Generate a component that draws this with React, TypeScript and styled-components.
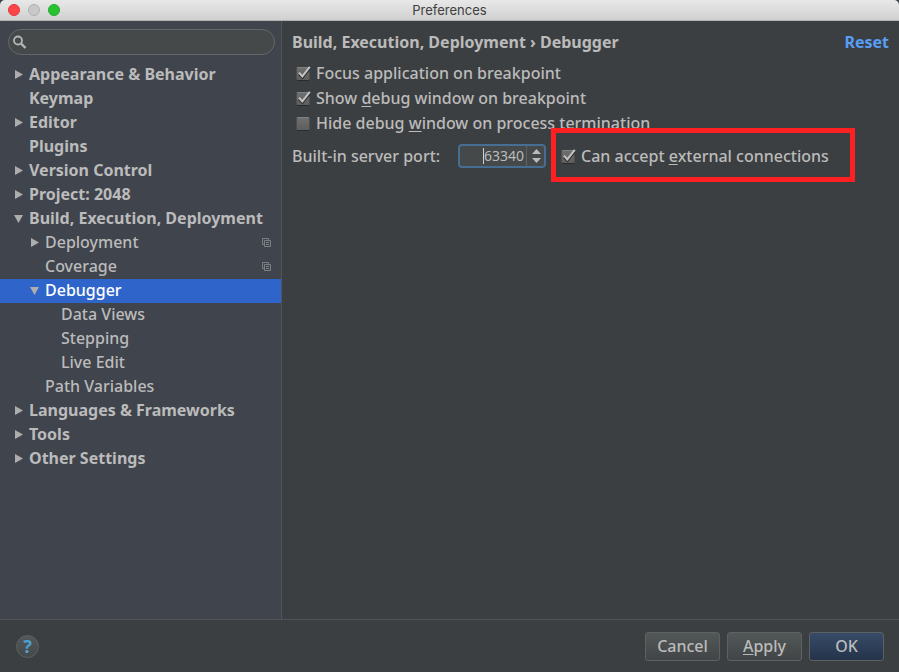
import React, { useState } from 'react';
import styled, { createGlobalStyle, css } from 'styled-components';

const GlobalStyle = createGlobalStyle`
  * { box-sizing: border-box; }
  body {
    margin: 0;
    background: #3c3f41;
    color: #bbbbbb;
    font: 500 16px/24px "Noto Sans", "Lucida Grande", sans-serif;
  }
  button, input { font: inherit; color: inherit; }
`;

const Window = styled.div`
  display: flex;
  flex-direction: column;
  min-height: 100vh;
`;

const TitleBar = styled.header`
  display: grid;
  grid-template-columns: 1fr auto 1fr;
  align-items: center;
  height: 21px;
  padding: 0 8px;
  border-bottom: 1px solid #b1b1b1;
  border-radius: 5px 5px 0 0;
  background: linear-gradient(#e8e8e8, #d0d0d0);
`;

const Lights = styled.div`
  display: flex;
  gap: 8px;
`;

const Light = styled.button<{ $fill: string; $edge: string }>`
  width: 12px;
  height: 12px;
  padding: 0;
  border: 1px solid ${(p) => p.$edge};
  border-radius: 50%;
  background: ${(p) => p.$fill};
`;

const WindowTitle = styled.h1`
  margin: 0;
  color: #404040;
  font: 400 13px/20px Inter, sans-serif;
`;

const Body = styled.div`
  display: flex;
  flex: 1;
`;

const Sidebar = styled.aside`
  flex: none;
  width: 282px;
  padding-top: 8px;
  border-right: 1px solid #515558;
  background: #40444d;
`;

const SearchBox = styled.label`
  display: flex;
  align-items: center;
  gap: 4px;
  height: 26px;
  margin: 0 6px 8px 8px;
  padding: 0 12px 0 4px;
  border: 1px solid #646769;
  border-radius: 13px;
  background: #45494a;
`;

const SearchInput = styled.input`
  flex: 1;
  min-width: 0;
  padding: 0;
  border: 0;
  outline: 0;
  background: transparent;
`;

const Tree = styled.ul`
  margin: 0;
  padding: 0;
  list-style: none;
`;

const TreeRow = styled.button<{ $level: number; $selected: boolean }>`
  display: flex;
  align-items: center;
  width: 100%;
  height: 24px;
  padding: 0 9px 0 ${(p) => 13 + p.$level * 16}px;
  border: 0;
  background: ${(p) => (p.$selected ? '#2f65ca' : 'transparent')};
  color: ${(p) => (p.$selected ? '#ffffff' : '#bbbbbb')};
  font-weight: ${(p) => (p.$level === 0 ? 700 : 500)};
  text-align: left;
  white-space: nowrap;
`;

const ArrowSlot = styled.span`
  display: flex;
  flex: none;
  width: 16px;
`;

const RowText = styled.span`
  flex: 1;
  padding-bottom: 2px;
`;

const Content = styled.main`
  flex: 1;
  min-width: 0;
  padding: 9px 10px 0;
`;

const ContentHead = styled.div`
  display: flex;
  justify-content: space-between;
  margin-bottom: 6px;
  font-weight: 700;
`;

const Crumbs = styled.h2`
  margin: 0;
  font-size: 16px;
`;

const ResetLink = styled.a`
  color: #589df6;
  text-decoration: none;
`;

const Options = styled.div`
  display: flex;
  flex-direction: column;
  align-items: flex-start;
  padding-left: 4px;
`;

const highlight = css`
  &::after {
    content: '';
    position: absolute;
    inset: -15px -26px -14px -10px;
    border: 5px solid #ff2121;
    pointer-events: none;
  }
`;

const CheckLabel = styled.label<{ $highlighted: boolean }>`
  position: relative;
  display: flex;
  align-items: center;
  gap: 6px;
  height: 25px;
  white-space: nowrap;
  ${(p) => p.$highlighted && highlight}
`;

const CheckStack = styled.span`
  display: grid;
  flex: none;
  width: 14px;
  height: 14px;
  margin-top: 2px;

  > * { grid-area: 1 / 1; }
`;

const CheckInput = styled.input`
  appearance: none;
  width: 14px;
  height: 14px;
  margin: 0;
  border: 1px solid #4c4f50;
  border-top-color: #818181;
  border-bottom-color: #2b2b2b;
  border-radius: 2px;
  background: linear-gradient(#6e6e6e, #5e5e5e);
`;

const Tick = styled.svg`
  overflow: visible;
  pointer-events: none;
`;

const PortRow = styled.div`
  display: flex;
  align-items: center;
  margin-top: 8px;
`;

const PortLabel = styled.label`
  width: 166px;
`;

const Spinner = styled.div`
  position: relative;
  display: flex;
  width: 88px;
  height: 24px;
  margin-right: 15px;
  border: 2px solid #466d94;
  border-radius: 4px;
  background: #45494a;
`;

const PortInput = styled.input`
  flex: 1;
  min-width: 0;
  padding: 0 2px;
  border: 0;
  border-right: 1px solid #5f6364;
  outline: 0;
  background: transparent;
  font-size: 14px;
  font-weight: 400;
  text-align: right;
`;

const Caret = styled.span`
  position: absolute;
  top: 2px;
  bottom: 2px;
  left: 23px;
  width: 1px;
  background: #d0d0d0;
`;

const Steps = styled.div`
  display: flex;
  flex-direction: column;
  justify-content: center;
  gap: 4px;
  width: 17px;
  padding-left: 2px;
`;

const Step = styled.button`
  display: flex;
  justify-content: center;
  padding: 0;
  border: 0;
  background: none;
`;

const Footer = styled.footer`
  display: flex;
  align-items: center;
  justify-content: space-between;
  height: 53px;
  padding: 1px 15px 0 16px;
  border-top: 1px solid #515456;
`;

const HelpButton = styled.button`
  width: 23px;
  height: 23px;
  padding: 0 0 2px;
  border: 1px solid #5e6162;
  border-radius: 50%;
  background: linear-gradient(#525757, #44484a);
  color: #4c9fcf;
  font-size: 18px;
  font-weight: 700;
  line-height: 18px;
`;

const Actions = styled.div`
  display: flex;
  gap: 7px;
`;

const ActionButton = styled.button<{ $primary?: boolean }>`
  width: 75px;
  height: 29px;
  padding: 0 0 2px;
  border: 1px solid #5e6162;
  border-radius: 3px;
  background: ${(p) =>
    p.$primary ? 'linear-gradient(#374b68, #24334a)' : 'linear-gradient(#525757, #414547)'};
  line-height: 24px;
`;

const Mnemonic = styled.u`
  text-decoration-thickness: 1px;
  text-underline-offset: 2px;
  text-decoration-skip-ink: none;
`;

type ArrowKind = 'open' | 'closed' | null;

interface TreeItem {
  text: string;
  level: number;
  arrow: ArrowKind;
  project?: boolean;
}

const items: TreeItem[] = [
  { text: 'Appearance & Behavior', level: 0, arrow: 'closed' },
  { text: 'Keymap', level: 0, arrow: null },
  { text: 'Editor', level: 0, arrow: 'closed' },
  { text: 'Plugins', level: 0, arrow: null },
  { text: 'Version Control', level: 0, arrow: 'closed' },
  { text: 'Project: 2048', level: 0, arrow: 'closed' },
  { text: 'Build, Execution, Deployment', level: 0, arrow: 'open' },
  { text: 'Deployment', level: 1, arrow: 'closed', project: true },
  { text: 'Coverage', level: 1, arrow: null, project: true },
  { text: 'Debugger', level: 1, arrow: 'open' },
  { text: 'Data Views', level: 2, arrow: null },
  { text: 'Stepping', level: 2, arrow: null },
  { text: 'Live Edit', level: 2, arrow: null },
  { text: 'Path Variables', level: 1, arrow: null },
  { text: 'Languages & Frameworks', level: 0, arrow: 'closed' },
  { text: 'Tools', level: 0, arrow: 'closed' },
  { text: 'Other Settings', level: 0, arrow: 'closed' },
];

function Arrow({ kind }: { kind: ArrowKind }) {
  if (!kind) return null;
  return (
    <svg width="11" height="10" viewBox="0 0 11 10" fill="#adadad" aria-hidden="true">
      <path d={kind === 'open' ? 'M1 1H10L5.5 9Z' : 'M2 0L10 4.5L2 9Z'} />
    </svg>
  );
}

function ProjectIcon() {
  return (
    <svg width="10" height="10" viewBox="0 0 10 10" fill="none" stroke="#7c7f84" aria-hidden="true">
      <path d="M2.5 6.5H.5V.5H6.5V2.5M2.5 2.5H8.5V8.5H2.5ZM4 4.5H7M4 6.5H7" />
    </svg>
  );
}

function SearchIcon() {
  return (
    <svg width="14" height="14" viewBox="0 0 14 14" fill="none" stroke="#b4b6b7" aria-hidden="true">
      <circle cx="5" cy="5.5" r="4" strokeWidth="1.8" />
      <path d="M8 8.5L12.5 13" strokeWidth="2.4" />
    </svg>
  );
}

interface CheckProps {
  initial: boolean;
  highlighted?: boolean;
  children: React.ReactNode;
}

function Check({ initial, highlighted = false, children }: CheckProps) {
  const [on, setOn] = useState(initial);
  return (
    <CheckLabel $highlighted={highlighted}>
      <CheckStack>
        <CheckInput type="checkbox" checked={on} onChange={() => setOn(!on)} />
        {on && (
          <Tick width="14" height="14" viewBox="0 0 14 14" fill="none" aria-hidden="true">
            <path d="M3 7.4L6.4 11L14 1.6" stroke="#303030" strokeWidth="2" />
            <path d="M3 5.6L6.3 9.4L13.8 -.2" stroke="#c4c4c4" strokeWidth="2" />
          </Tick>
        )}
      </CheckStack>
      <span>{children}</span>
    </CheckLabel>
  );
}

export default function App() {
  const [selected, setSelected] = useState('Debugger');
  const [port, setPort] = useState('63340');
  const bump = (by: number) => setPort(String(Number(port) + by));

  return (
    <Window>
      <GlobalStyle />
      <TitleBar>
        <Lights>
          <Light $fill="#fc4548" $edge="#e0383c" aria-label="Close" />
          <Light $fill="#c8c8c8" $edge="#b0b0b0" aria-label="Minimize" />
          <Light $fill="#28c231" $edge="#1fae28" aria-label="Zoom" />
        </Lights>
        <WindowTitle>Preferences</WindowTitle>
      </TitleBar>
      <Body>
        <Sidebar>
          <SearchBox>
            <SearchIcon />
            <SearchInput type="text" aria-label="Search settings" />
          </SearchBox>
          <Tree>
            {items.map((item) => (
              <li key={item.text}>
                <TreeRow
                  $level={item.level}
                  $selected={item.text === selected}
                  onClick={() => setSelected(item.text)}
                >
                  <ArrowSlot>
                    <Arrow kind={item.arrow} />
                  </ArrowSlot>
                  <RowText>{item.text}</RowText>
                  {item.project && <ProjectIcon />}
                </TreeRow>
              </li>
            ))}
          </Tree>
        </Sidebar>
        <Content>
          <ContentHead>
            <Crumbs>Build, Execution, Deployment › Debugger</Crumbs>
            <ResetLink href="#reset">Reset</ResetLink>
          </ContentHead>
          <Options>
            <Check initial>Focus application on breakpoint</Check>
            <Check initial>
              Show <Mnemonic>d</Mnemonic>ebug window on breakpoint
            </Check>
            <Check initial={false}>
              Hide debug <Mnemonic>w</Mnemonic>indow on process termination
            </Check>
          </Options>
          <PortRow>
            <PortLabel htmlFor="port">Built-in server port:</PortLabel>
            <Spinner>
              <PortInput id="port" type="text" value={port} onChange={(e) => setPort(e.target.value)} />
              <Caret />
              <Steps>
                <Step aria-label="Increase port" onClick={() => bump(1)}>
                  <svg width="9" height="5" viewBox="0 0 9 5" fill="#bbbbbb">
                    <path d="M0 5L4.5 0L9 5Z" />
                  </svg>
                </Step>
                <Step aria-label="Decrease port" onClick={() => bump(-1)}>
                  <svg width="9" height="5" viewBox="0 0 9 5" fill="#bbbbbb">
                    <path d="M0 0L4.5 5L9 0Z" />
                  </svg>
                </Step>
              </Steps>
            </Spinner>
            <Check initial highlighted>
              Can accept <Mnemonic>e</Mnemonic>xternal connections
            </Check>
          </PortRow>
        </Content>
      </Body>
      <Footer>
        <HelpButton aria-label="Help">?</HelpButton>
        <Actions>
          <ActionButton>Cancel</ActionButton>
          <ActionButton>
            <Mnemonic>A</Mnemonic>pply
          </ActionButton>
          <ActionButton $primary>OK</ActionButton>
        </Actions>
      </Footer>
    </Window>
  );
}
